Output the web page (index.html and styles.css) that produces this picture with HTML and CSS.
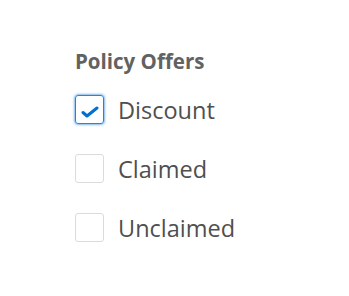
FILE: index.html
```html
<!DOCTYPE html>
<html lang="en">
<head>
<meta charset="UTF-8">
<title>Policy Offers</title>
<link rel="stylesheet" href="styles.css">
</head>
<body>
<fieldset class="offers">
  <legend class="offers-title">Policy Offers</legend>
  <label class="option">
    <span class="box checked focus">
      <svg class="tick" viewBox="0 0 18 12" width="18" height="12"><path d="M2 6.5 L6 10 L16 2" fill="none" stroke="#0070d2" stroke-width="3" stroke-linecap="round" stroke-linejoin="round"/></svg>
    </span>
    <span class="option-text">Discount</span>
  </label>
  <label class="option">
    <span class="box"></span>
    <span class="option-text">Claimed</span>
  </label>
  <label class="option">
    <span class="box"></span>
    <span class="option-text">Unclaimed</span>
  </label>
</fieldset>
</body>
</html>
```

FILE: styles.css
```css
body {
margin: 0;
background: #fff;
font-family: "Open Sans", sans-serif;
}
.offers {
border: 0;
margin: 0;
padding: 47px 0 0 75px;
display: flex;
flex-direction: column;
gap: 30px;
}
.offers-title {
float: left;
padding: 0;
font-size: 20.5px;
font-weight: 700;
color: #626262;
line-height: 28px;
margin-bottom: -10px;
}
.option {
display: flex;
align-items: center;
gap: 14px;
}
.box {
width: 27px;
height: 27px;
border: 1px solid #dddbda;
border-radius: 3px;
display: flex;
justify-content: center;
align-items: center;
}
.box.checked {
border-color: #1589ee;
}
.box.focus {
box-shadow: 0 0 3px #0070d2;
}
.tick {
margin-top: 4px;
}
.option-text {
font-size: 23.5px;
color: #4f4f4f;
line-height: 28px;
}
```
